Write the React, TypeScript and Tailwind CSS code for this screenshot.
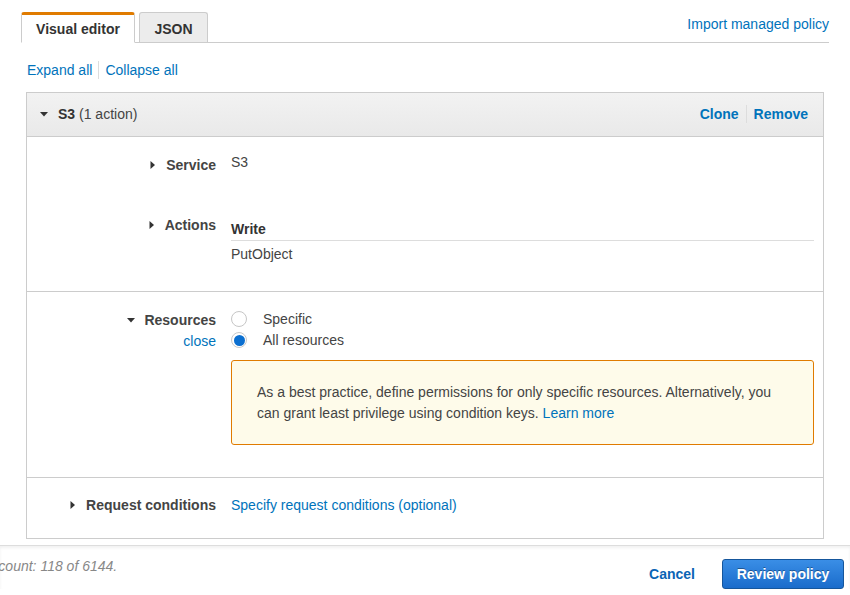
function Caret({ open = false }: { open?: boolean }) {
  return (
    <svg
      viewBox="0 0 8 8"
      className="h-2 w-2 shrink-0 fill-[#333]"
      aria-hidden="true"
    >
      {open ? <polygon points="0,2 8,2 4,6.5" /> : <polygon points="1.5,0 6,4 1.5,8" />}
    </svg>
  );
}

function Radio({ checked }: { checked?: boolean }) {
  return (
    <span
      className={[
        "flex h-4 w-4 items-center justify-center rounded-full border bg-white",
        checked ? "border-[#c9c9c9]" : "border-[#c6c6c6]"
      ].join(" ")}
    >
      {checked ? <span className="h-[11px] w-[11px] rounded-full bg-[#0b6fd0]" /> : null}
    </span>
  );
}

function Label({ text, open = false }: { text: string; open?: boolean }) {
  return (
    <div className="flex w-[189px] shrink-0 items-center justify-end gap-[9px]">
      <Caret open={open} />
      <span className="font-bold text-[#444]">{text}</span>
    </div>
  );
}

export default function App() {
  return (
    <div className="relative h-[595px] w-[850px] overflow-hidden bg-white font-['Liberation_Sans',Arial,sans-serif] text-[14px] leading-[20px] text-[#444]">
      <div className="mx-[21px] flex items-end justify-between border-b border-[#ccc] pt-[12px]">
        <div className="flex gap-[4px]">
          <div className="mb-[-1px] flex h-[31px] w-[114px] items-center justify-center rounded-t-[3px] border border-t-[3px] border-[#ccc] border-b-white border-t-[#e07b00] bg-white pt-[1px] font-bold text-[#333]">
            Visual editor
          </div>
          <div className="flex h-[30px] w-[69px] items-center justify-center rounded-t-[3px] border border-b-0 border-[#ccc] bg-[#ececec] pt-[3px] font-bold text-[#333]">
            JSON
          </div>
        </div>
        <a className="mb-[8px] text-[#0073bb]">Import managed policy</a>
      </div>

      <div className="mx-[26px] mt-[17px] flex items-center">
        <a className="pl-[1px] text-[#0073bb]">Expand all</a>
        <span className="mx-[6px] h-[18px] w-px bg-[#ddd]" />
        <a className="text-[#0073bb]">Collapse all</a>
      </div>

      <div className="mx-[26px] mt-[12px] border border-[#ccc]">
        <div className="flex h-[44px] items-center justify-between border-b border-[#ccc] bg-[linear-gradient(#f2f2f2,#e9e9e9)] pb-[2px] pl-[13px] pr-[15px]">
          <div className="flex items-center gap-[10px]">
            <Caret open />
            <span>
              <b className="text-[#333]">S3</b> (1 action)
            </span>
          </div>
          <div className="flex items-center font-bold text-[#0073bb]">
            <a>Clone</a>
            <span className="mx-[7px] h-[18px] w-px bg-[#ddd]" />
            <a>Remove</a>
          </div>
        </div>

        <div className="border-b border-[#ccc] pb-[27px] pr-[9px] pt-[18px]">
          <div className="flex">
            <Label text="Service" />
            <div className="ml-[15px] mt-[-3px]">S3</div>
          </div>
          <div className="mt-[40px] flex items-start">
            <Label text="Actions" />
            <div className="ml-[15px] mt-[4px] flex-1">
              <div className="border-b border-[#ddd] pb-[1px] font-bold text-[#333]">Write</div>
              <div className="mt-[3px]">PutObject</div>
            </div>
          </div>
        </div>

        <div className="border-b border-[#ccc] pb-[32px] pr-[9px] pt-[18px]">
          <div className="flex">
            <div className="flex w-[189px] shrink-0 flex-col items-end">
              <div className="flex items-center gap-[9px]">
                <Caret open />
                <span className="font-bold text-[#444]">Resources</span>
              </div>
              <a className="mt-[1px] text-[#0073bb]">close</a>
            </div>
            <div className="ml-[15px] flex-1">
              <div className="mt-[-1px] flex flex-col gap-[1px]">
                <label className="flex items-center gap-[16px]">
                  <Radio />
                  <span>Specific</span>
                </label>
                <label className="flex items-center gap-[16px]">
                  <Radio checked />
                  <span>All resources</span>
                </label>
              </div>
              <div className="mt-[10px] rounded-[3px] border border-[#e07b00] bg-[#fefbea] pb-[20px] pl-[25px] pr-[20px] pt-[21px] leading-[21px]">
                As a best practice, define permissions for only specific resources. Alternatively, you
                can grant least privilege using condition keys.{" "}
                <a className="text-[#0073bb]">Learn more</a>
              </div>
            </div>
          </div>
        </div>

        <div className="flex items-center pb-[23px] pt-[17px]">
          <Label text="Request conditions" />
          <a className="ml-[15px] text-[#0073bb]">Specify request conditions (optional)</a>
        </div>
      </div>

      <div className="mt-[6px] border-t border-[#ddd] shadow-[inset_0_2px_3px_rgba(0,0,0,0.06)]">
        <div className="flex items-start justify-between">
          <div className="ml-[-67px] mt-[10px] italic text-[#888]">Character count: 118 of 6144.</div>
          <div className="mr-[6px] mt-[13px] flex items-center gap-[27px]">
            <a className="font-bold text-[#0a64b5]">Cancel</a>
            <button className="h-[30px] w-[122px] rounded-[3px] border border-[#15569c] bg-[linear-gradient(#3a8ee6,#1a6ccb)] font-bold text-white [text-shadow:0_-1px_0_rgba(0,0,0,0.35)]">
              Review policy
            </button>
          </div>
        </div>
      </div>
    </div>
  );
}
